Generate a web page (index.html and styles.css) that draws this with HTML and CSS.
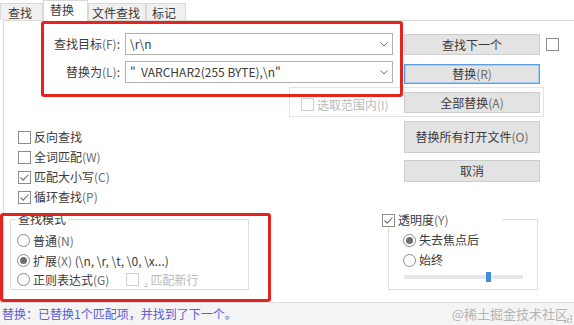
FILE: index.html
```html
<!DOCTYPE html>
<html lang="zh-CN">
<head>
<meta charset="utf-8">
<title>替换</title>
<link rel="stylesheet" href="styles.css">
</head>
<body>
<div class="tabs">
  <div class="tab t1">查找</div>
  <div class="tab active t2">替换</div>
  <div class="tab t3">文件查找</div>
  <div class="tab t4">标记</div>
</div>

<div class="panel">
  <div class="row r1">
    <label class="lbl">查找目标<span class="mn">(F)</span>:</label>
    <div class="combo"><span class="val">\r\n</span><svg class="chev" width="8" height="5" viewBox="0 0 8 5"><path d="M0.5 0.5 L4 4 L7.5 0.5" fill="none" stroke="#6a6a6a" stroke-width="1"/></svg></div>
    <button class="btn b-next">查找下一个</button>
    <span class="chk c-extra"></span>
  </div>

  <div class="row r2">
    <label class="lbl">替换为<span class="mn">(L)</span>:</label>
    <div class="combo"><span class="val">"&nbsp; VARCHAR2(255 BYTE),\n"</span><svg class="chev" width="8" height="5" viewBox="0 0 8 5"><path d="M0.5 0.5 L4 4 L7.5 0.5" fill="none" stroke="#6a6a6a" stroke-width="1"/></svg></div>
    <button class="btn b-rep">替换<span class="mn">(R)</span></button>
  </div>

  <div class="row r3">
    <div class="selgroup">
      <div class="opt dis"><span class="chk"></span><span class="txt">选取范围内<span class="mn">(I)</span></span></div>
      <button class="btn b-all">全部替换<span class="mn">(A)</span></button>
    </div>
  </div>

  <div class="mid">
    <div class="opts">
      <div class="opt"><span class="chk"></span><span class="txt">反向查找</span></div>
      <div class="opt"><span class="chk"></span><span class="txt">全词匹配<span class="mn">(W)</span></span></div>
      <div class="opt"><span class="chk on"><svg width="11" height="11" viewBox="0 0 11 11"><path d="M1.5 5.5 L4.2 8.2 L9.5 2.5" fill="none" stroke="#707070" stroke-width="1.1"/></svg></span><span class="txt">匹配大小写<span class="mn">(C)</span></span></div>
      <div class="opt"><span class="chk on"><svg width="11" height="11" viewBox="0 0 11 11"><path d="M1.5 5.5 L4.2 8.2 L9.5 2.5" fill="none" stroke="#707070" stroke-width="1.1"/></svg></span><span class="txt">循环查找<span class="mn">(P)</span></span></div>
    </div>
    <div class="btncol">
      <button class="btn b-open">替换所有打开文件<span class="mn">(O)</span></button>
      <button class="btn b-cancel">取消</button>
    </div>
  </div>

  <div class="bottom">
    <div class="group g1">
      <span class="legend">查找模式</span>
      <div class="radio-row first"><span class="radio"></span><span class="txt">普通<span class="mn">(N)</span></span></div>
      <div class="radio-row"><span class="radio on"></span><span class="txt">扩展<span class="mn">(X)</span> (\n, \r, \t, \0, \x...)</span></div>
      <div class="radio-row"><span class="radio"></span><span class="txt">正则表达式<span class="mn">(G)</span></span>
        <span class="opt dis nl"><span class="chk"></span><span class="txt"><u>.</u> 匹配新行</span></span>
      </div>
    </div>
    <div class="group g2">
      <span class="legend lg2"><span class="chk on"><svg width="11" height="11" viewBox="0 0 11 11"><path d="M1.5 5.5 L4.2 8.2 L9.5 2.5" fill="none" stroke="#707070" stroke-width="1.1"/></svg></span><span class="txt">透明度<span class="mn">(Y)</span></span></span>
      <div class="radio-row first"><span class="radio on"></span><span class="txt">失去焦点后</span></div>
      <div class="radio-row"><span class="radio"></span><span class="txt">始终</span></div>
      <div class="slider"><span class="thumb"></span></div>
    </div>
  </div>
</div>

<div class="status">
  <span class="msg">替换：已替换1个匹配项，并找到了下一个。</span>
  <span class="wm">@稀土掘金技术社区</span>
</div>

<svg class="grip" width="8" height="8" viewBox="0 0 8 8">
  <rect x="6" y="0" width="2" height="2" fill="#c4c4c4"/>
  <rect x="3" y="3" width="2" height="2" fill="#c4c4c4"/>
  <rect x="6" y="3" width="2" height="2" fill="#c4c4c4"/>
  <rect x="0" y="6" width="2" height="2" fill="#c4c4c4"/>
  <rect x="3" y="6" width="2" height="2" fill="#c4c4c4"/>
  <rect x="6" y="6" width="2" height="2" fill="#c4c4c4"/>
</svg>

<div class="mark m1"></div>
<div class="mark m2"></div>
</body>
</html>
```

FILE: styles.css
```css
* { box-sizing: border-box; }
html, body { margin: 0; padding: 0; }
body {
  width: 574px;
  height: 325px;
  overflow: hidden;
  position: relative;
  background: #fff;
  font-family: "Noto Sans CJK SC", "Noto Sans", sans-serif;
  font-size: 12px;
  color: #3a3a3a;
}
u { text-decoration: underline; text-underline-offset: 1px; }
.mn { color: #6a6a6a; }

/* tabs */
.tabs { display: flex; height: 20px; align-items: flex-end; }
.tab {
  height: 17px;
  background: #f0f0f0;
  border: 1px solid #d9d9d9;
  border-bottom: none;
  line-height: 16px;
  padding-top: 1px;
  white-space: nowrap;
}
.tab.active {
  height: 21px;
  margin-bottom: -1px;
  background: #fff;
  position: relative;
  z-index: 1;
}
.t1 { width: 43px; padding-left: 7px; }
.t2 { width: 45px; padding-left: 6px; }
.t3 { width: 58px; padding-left: 3px; }
.t4 { width: 40px; padding-left: 5px; }

/* panel */
.panel {
  margin-left: 3px;
  height: 282px;
  border-left: 1px solid #dadada;
  border-top: 1px solid #d9d9d9;
}
.row { display: flex; align-items: flex-start; }
.r1 { margin-top: 12px; height: 22px; }
.r2 { margin-top: 6px; height: 22px; }
.r3 { margin-top: 4px; height: 30px; }
.lbl {
  width: 116px;
  margin-right: 5px;
  text-align: right;
  line-height: 22px;
  white-space: nowrap;
}
.combo {
  width: 268px;
  height: 22px;
  border: 1px solid #b0b0b0;
  display: flex;
  align-items: center;
  justify-content: space-between;
  padding: 0 4px 0 4px;
  background: #fff;
}
.val { white-space: pre; line-height: 18px; }
.chev { display: block; }

.btn {
  font: inherit;
  color: #3a3a3a;
  width: 136px;
  height: 21px;
  padding: 0;
  margin: 0;
  background: #e3e3e3;
  border: 1px solid #cdcdcd;
  line-height: 18px;
  text-align: center;
  white-space: nowrap;
}
.b-next { margin-left: 11px; margin-top: 1px; }
.b-rep {
  margin-left: 11px;
  margin-top: 3px;
  height: 20px;
  border: 1px solid #5c9ee0;
  box-shadow: inset 0 0 0 1px #a6cbef;
}
.c-extra { margin-left: 6px; margin-top: 5px; }

.chk {
  width: 13px;
  height: 13px;
  border: 1px solid #8c8c8c;
  background: #fff;
  display: inline-flex;
  align-items: center;
  justify-content: center;
  flex: none;
}
.chk svg { display: block; }

.selgroup {
  margin-left: 285px;
  width: 255px;
  height: 30px;
  border: 1px solid #e4e4e4;
  display: flex;
  align-items: flex-start;
  padding: 4px 3px 0 11px;
}
.selgroup .opt { margin-top: 6px; height: 13px; }
.b-all { margin-left: auto; height: 21px; }

.opt { display: flex; align-items: center; height: 20px; white-space: nowrap; }
.opt .txt { margin-left: 3px; line-height: 14px; }
.opt.dis .chk { border-color: #d0d0d0; }
.opt.dis .txt, .opt.dis .mn { color: #b9b9b9; }

.mid { display: flex; height: 95px; }
.opts { margin-left: 14px; margin-top: 10px; width: 200px; }
.btncol {
  margin-left: 186px;
  margin-top: 4px;
  display: flex;
  flex-direction: column;
  gap: 7px;
}
.b-open { height: 32px; }
.b-cancel { height: 22px; }

.bottom { display: flex; height: 89px; }
.group {
  position: relative;
  border: 1px solid #dedede;
  margin-top: 7px;
  height: 71px;
}
.g1 { margin-left: 6px; width: 239px; padding: 10px 0 0 6px; }
.g2 { margin-left: 139px; width: 150px; padding: 10px 0 0 14px; }
.legend {
  position: absolute;
  top: -8px;
  left: 5px;
  padding: 0 2px;
  background: #fff;
  line-height: 14px;
}
.lg2 {
  top: -7px;
  left: -7px;
  width: 120px;
  padding: 0;
  height: 14px;
  display: flex;
  align-items: center;
}
.lg2 .txt { margin-left: 3px; }

.radio-row { display: flex; align-items: center; height: 19px; white-space: nowrap; }
.radio-row.first { height: 21px; }
.g2 .radio-row { height: 20px; }
.radio-row .txt { margin-left: 3px; line-height: 14px; }
.radio {
  width: 13px;
  height: 13px;
  border: 1px solid #8a8a8a;
  border-radius: 50%;
  background: #fff;
  display: inline-flex;
  align-items: center;
  justify-content: center;
  flex: none;
}
.radio.on::after {
  content: "";
  width: 7px;
  height: 7px;
  border-radius: 50%;
  background: #6e6e6e;
}
.nl { margin-left: 17px; }
.nl .txt { margin-left: 5px; }

.slider {
  position: relative;
  margin-top: 5px;
  margin-left: 1px;
  width: 119px;
  height: 4px;
  background: #e7e7e7;
}
.thumb {
  position: absolute;
  left: 82px;
  top: -3px;
  width: 5px;
  height: 10px;
  background: #3f8fdb;
}

/* status */
.status {
  border-top: 1px solid #dcdcdc;
  height: 23px;
  background: #f4f4f4;
  display: flex;
  align-items: center;
  padding-left: 2px;
}
.msg { color: #5a5cd8; line-height: 16px; }
.wm { margin-left: auto; margin-right: 6px; color: #b4b4b4; font-size: 13px; line-height: 16px; }
.grip { position: absolute; right: 2px; bottom: 2px; }

/* annotation overlays */
.mark {
  position: absolute;
  border: 3px solid #e3241f;
  border-radius: 3px;
  pointer-events: none;
}
.m1 { left: 41px; top: 21px; width: 362px; height: 76px; }
.m2 { left: 0; top: 213px; width: 271px; height: 89px; }
```
